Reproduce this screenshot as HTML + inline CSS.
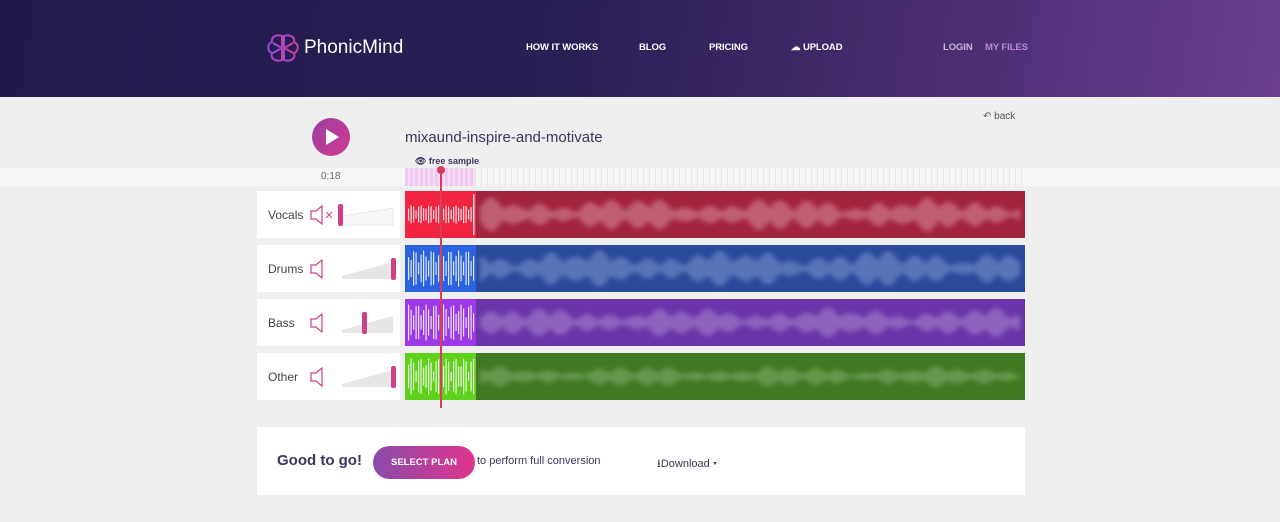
<!DOCTYPE html>
<html><head><meta charset="utf-8"><style>
*{margin:0;padding:0;box-sizing:border-box}
body{width:1280px;height:522px;overflow:hidden;background:#efefef;font-family:"Liberation Sans",sans-serif;position:relative}
.hdr{position:absolute;left:0;top:0;width:1280px;height:97px;background:linear-gradient(100deg,#201a4a 0%,#2a1f55 45%,#4b2e73 75%,#6a3f92 100%)}
.logo{position:absolute;left:266px;top:33px;color:#fff;font-size:19px;display:flex;align-items:center;gap:4px}
.nav{position:absolute;top:42px;color:#fff;font-size:9.5px;font-weight:bold;letter-spacing:-.1px}
.play{position:absolute;left:312px;top:118px;width:38px;height:38px;border-radius:50%;background:linear-gradient(135deg,#9b3fa3,#d23a8e)}
.play:after{content:"";position:absolute;left:14px;top:11px;border-left:13px solid #fff;border-top:8px solid transparent;border-bottom:8px solid transparent}
.title{position:absolute;left:405px;top:129px;font-size:15px;color:#3c3560}
.back{position:absolute;left:983px;top:111px;font-size:10px;color:#555}
.strip{position:absolute;left:0;top:168px;width:1280px;height:18px;background:#f7f7f7}
.ticks{position:absolute;left:475px;top:168px;width:550px;height:18px;background:repeating-linear-gradient(90deg,#e6e6e6 0 1px,transparent 1px 6px)}
.pink{position:absolute;left:405px;top:168px;width:70px;height:18px;background:repeating-linear-gradient(90deg,#f0c9f0 0 3px,#f6dcf6 3px 5px)}
.row{position:absolute;left:257px;width:768px;height:47px}
.lab{position:absolute;left:0;top:0;width:143px;height:47px;background:#fff}
.lab span{position:absolute;left:11px;top:17px;font-size:12px;color:#444}
.wv{position:absolute;left:148px;top:0;width:620px;height:47px}
.ph{position:absolute;left:440px;top:168px;width:2px;height:240px;background:#e03a5a}
.box{position:absolute;left:257px;top:427px;width:768px;height:68px;background:#fff}
</style></head><body>
<div class="hdr">
<div class="logo"><svg width="34" height="30" viewBox="0 0 34 30"><defs><linearGradient id="lg" x1="0" x2="1"><stop offset="0" stop-color="#8f4fe0"/><stop offset="1" stop-color="#d03d9a"/></linearGradient></defs><g fill="none" stroke="url(#lg)" stroke-width="2"><path d="M16 3C10 1 5 4 6 9C1 11 1 18 6 20C4 26 10 29 16 27Z"/><path d="M18 3C24 1 29 4 28 9C33 11 33 18 28 20C30 26 24 29 18 27Z"/><path d="M7 10Q12 13 16 15M27 10Q22 13 18 15M7 20Q12 17 16 15M27 20Q22 17 18 15"/></g></svg><span>PhonicMind</span></div>
<div class="nav" style="left:526px">HOW IT WORKS</div>
<div class="nav" style="left:639px">BLOG</div>
<div class="nav" style="left:709px">PRICING</div>
<div class="nav" style="left:791px">☁ UPLOAD</div>
<div class="nav" style="left:943px;color:#c9b8e0">LOGIN</div>
<div class="nav" style="left:985px;color:#b98ad8">MY FILES</div>
</div>
<div class="play"></div>
<div class="title">mixaund-inspire-and-motivate</div>
<div class="back">↶ back</div>
<div class="strip"></div><div class="ticks"></div><div class="pink"></div>
<div style="position:absolute;left:321px;top:171px;font-size:10px;color:#666">0:18</div>
<div style="position:absolute;left:415px;top:156px;font-size:9px;font-weight:bold;color:#3c3560">👁 free sample</div>
<div class="row" style="top:191px"><div class="lab"><span>Vocals</span><svg style="position:absolute;left:52px;top:13px" width="90" height="22"><path d="M2 7h5l6-5v18l-6-5H2z" fill="none" stroke="#d0408a" stroke-width="1.2"/><path d="M17 8l6 6M23 8l-6 6" stroke="#d0408a"/><path d="M33 12L84 4V21H33z" fill="#f6f6f6" stroke="#ddd" stroke-width=".6"/><rect x="29" y="0" width="5" height="22" rx="2" fill="#d0408a"/></svg></div><svg class="wv" id="w0"></svg></div>
<div class="row" style="top:245px"><div class="lab"><span>Drums</span><svg style="position:absolute;left:52px;top:13px" width="90" height="22"><path d="M2 7h5l6-5v18l-6-5H2z" fill="none" stroke="#d0408a" stroke-width="1.2"/><path d="M33 18L84 4V21H33z" fill="#e6e6e6"/><rect x="82" y="0" width="5" height="22" rx="2" fill="#d0408a"/></svg></div><svg class="wv" id="w1"></svg></div>
<div class="row" style="top:299px"><div class="lab"><span>Bass</span><svg style="position:absolute;left:52px;top:13px" width="90" height="22"><path d="M2 7h5l6-5v18l-6-5H2z" fill="none" stroke="#d0408a" stroke-width="1.2"/><path d="M33 18L84 4V21H33z" fill="#e6e6e6"/><rect x="53" y="0" width="5" height="22" rx="2" fill="#d0408a"/></svg></div><svg class="wv" id="w2"></svg></div>
<div class="row" style="top:353px"><div class="lab"><span>Other</span><svg style="position:absolute;left:52px;top:13px" width="90" height="22"><path d="M2 7h5l6-5v18l-6-5H2z" fill="none" stroke="#d0408a" stroke-width="1.2"/><path d="M33 18L84 4V21H33z" fill="#e6e6e6"/><rect x="82" y="0" width="5" height="22" rx="2" fill="#d0408a"/></svg></div><svg class="wv" id="w3"></svg></div>
<div class="ph"></div>
<div style="position:absolute;left:437px;top:166px;width:8px;height:8px;border-radius:50%;background:#e03a5a"></div>
<div class="box">
<div style="position:absolute;left:20px;top:25px;font-size:15px;font-weight:bold;color:#3c3560">Good to go!</div>
<div style="position:absolute;left:116px;top:19px;width:102px;height:33px;border-radius:17px;background:linear-gradient(90deg,#8a4aa8,#e0368e);color:#fff;font-size:9.5px;font-weight:bold;text-align:center;line-height:33px">SELECT PLAN</div>
<div style="position:absolute;left:220px;top:28px;font-size:11px;color:#3c3560">to perform full conversion</div>
<div style="position:absolute;left:400px;top:28px;font-size:11px;color:#3c3560">⭳Download ▾</div>
</div>
<script>
var C=[["#a3243f","#f0243f","#d8909e"],["#2b4a9c","#2a62e0","#7f98d0"],["#6a35a8","#9c38e8","#a98ad0"],["#3f7a22","#5ed21a","#84b070"]];
var A=[.9,1.0,.8,.55];
for(var k=0;k<4;k++){var s='<defs><filter id="b'+k+'"><feGaussianBlur stdDeviation="2.5"/></filter></defs><rect width="620" height="47" fill="'+C[k][0]+'"/><rect width="71" height="47" fill="'+C[k][1]+'"/><g filter="url(#b'+k+')" fill="'+C[k][2]+'" opacity=".55">';
for(var x=75;x<615;x+=4){var v=Math.abs(Math.sin(x*.13+k*1.7))*.4+Math.abs(Math.sin(x*.021+k))*.35+Math.abs(Math.sin(x*.057+k*3))*.25;var h=(4+34*v*v)*A[k];s+='<rect x="'+x+'" y="'+(23.5-h/2)+'" width="4" height="'+h+'"/>';}
s+='</g><g fill="#fff" opacity=".85">';
for(var x=3;x<70;x+=2.5){var h=8+(k?28:10)*Math.abs(Math.sin(x*.9+k));s+='<rect x="'+x+'" y="'+(23.5-h/2)+'" width="1.2" height="'+h+'"/>';}
s+='</g>';if(k==0)s+='<rect x="68" y="3" width="1.5" height="41" fill="#fff" opacity=".8"/>';document.getElementById('w'+k).innerHTML=s;}
</script>
</body></html>
